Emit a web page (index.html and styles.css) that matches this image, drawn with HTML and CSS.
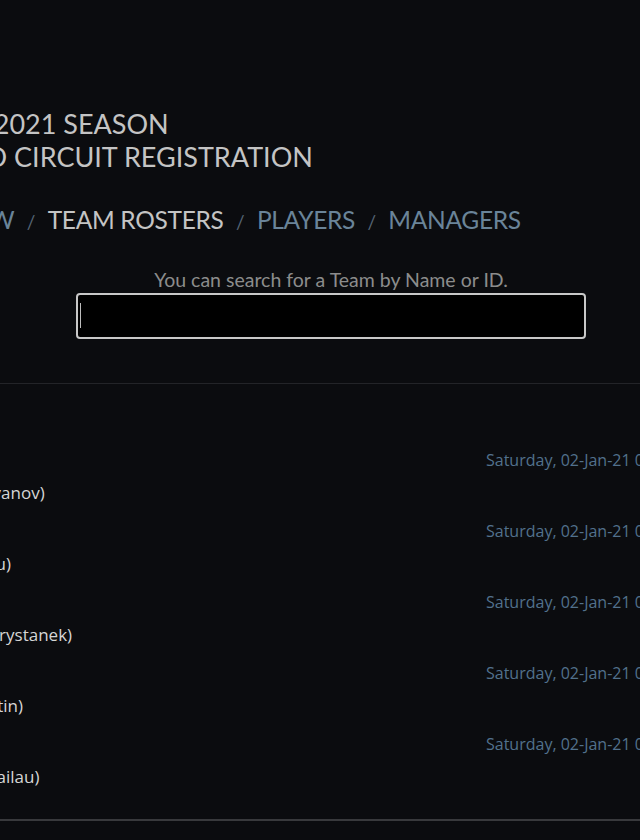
FILE: index.html
```html
<!DOCTYPE html>
<html lang="en">
<head>
<meta charset="utf-8">
<title>DPC Registration - Team Rosters</title>
<link rel="stylesheet" href="styles.css">
</head>
<body>
<div class="wrap">
  <header class="col header">
    <div class="title">THE DPC 2021 SEASON</div>
    <div class="title">DOTA PRO CIRCUIT REGISTRATION</div>
    <nav class="nav">
      <a class="nav-link">OVERVIEW</a><span class="sep">/</span>
      <a class="nav-link active">TEAM ROSTERS</a><span class="sep">/</span>
      <a class="nav-link">PLAYERS</a><span class="sep">/</span>
      <a class="nav-link">MANAGERS</a>
    </nav>
  </header>
</div>
<div class="wrap">
  <section class="col search">
    <div class="search-label">You can search for a Team by Name or ID.</div>
    <div class="search-box">
      <input class="search-input" type="text" aria-label="Search teams">
      <span class="caret"></span>
    </div>
  </section>
</div>
<div class="rule"></div>
<div class="wrap">
  <section class="col list">
    <div class="row">
      <div class="row-date">Saturday, 02-Jan-21 00:00:00 UTC</div>
      <div class="row-name">Spirit (Aleksey Ivanov)</div>
    </div>
    <div class="row">
      <div class="row-date">Saturday, 02-Jan-21 00:00:00 UTC</div>
      <div class="row-name">Nigma (Kuro Lou)</div>
    </div>
    <div class="row">
      <div class="row-date">Saturday, 02-Jan-21 00:00:00 UTC</div>
      <div class="row-name">Secret (Martin Prystanek)</div>
    </div>
    <div class="row">
      <div class="row-date">Saturday, 02-Jan-21 00:00:00 UTC</div>
      <div class="row-name">Alpha (Oleg Kostin)</div>
    </div>
    <div class="row">
      <div class="row-date">Saturday, 02-Jan-21 00:00:00 UTC</div>
      <div class="row-name">B8 (Vadim Mikhailau)</div>
    </div>
  </section>
</div>
<div class="rule rule-bottom"></div>
</body>
</html>
```

FILE: styles.css
```css
html, body {
  margin: 0;
  padding: 0;
}
body {
  background: #0b0c0f;
  height: 840px;
  overflow: hidden;
  font-family: Lato, "Open Sans", sans-serif;
  color: #c6c6c6;
}
.wrap {
  display: flex;
  justify-content: center;
  padding-left: 22px;
}
.col {
  width: 916px;
  flex-shrink: 0;
}
.header {
  padding-top: 107px;
}
.title {
  font-size: 27px;
  line-height: 33px;
  color: #c4c4c4;
  white-space: nowrap;
}
.nav {
  margin-top: 30px;
  padding-left: 16px;
  display: flex;
  align-items: baseline;
  gap: 12.5px;
  font-size: 24.5px;
  line-height: 33px;
  letter-spacing: -0.3px;
  white-space: nowrap;
}
.nav-link {
  color: #6a8499;
}
.nav-link.active {
  color: #c4c4c4;
}
.sep {
  color: #566575;
  font-size: 19px;
  line-height: 1;
}
.search {
  margin-top: 33px;
  display: flex;
  flex-direction: column;
  align-items: center;
}
.search-label {
  font-size: 19.5px;
  line-height: 22px;
  color: #8c8c8c;
  white-space: nowrap;
}
.search-box {
  position: relative;
  margin-top: 2px;
  width: 510px;
  height: 46px;
}
.search-input {
  box-sizing: border-box;
  width: 100%;
  height: 100%;
  background: #000;
  border: 2px solid #c8c8c8;
  border-radius: 4px;
  outline: none;
  color: #fff;
  padding: 0 10px;
  font: inherit;
}
.caret {
  position: absolute;
  left: 4px;
  top: 10px;
  width: 1px;
  height: 25px;
  background: #bdbdbd;
}
.rule {
  margin-top: 44px;
  height: 1px;
  background: #232428;
}
.list {
  padding-top: 58px;
}
.row {
  padding: 8px 0;
  display: grid;
  grid-template-columns: 1fr 303px;
  grid-template-rows: 20px 24px;
  row-gap: 11px;
}
.row-date {
  grid-column: 2;
  grid-row: 1;
  font-family: "Open Sans", sans-serif;
  font-size: 16px;
  line-height: 20px;
  color: #52718c;
  white-space: nowrap;
}
.row-name {
  grid-column: 1;
  grid-row: 2;
  font-family: "Open Sans", sans-serif;
  font-size: 17px;
  line-height: 24px;
  color: #d6d6d6;
  white-space: nowrap;
}
.rule-bottom {
  margin-top: 22px;
  height: 2px;
  background: #38393c;
}
```
